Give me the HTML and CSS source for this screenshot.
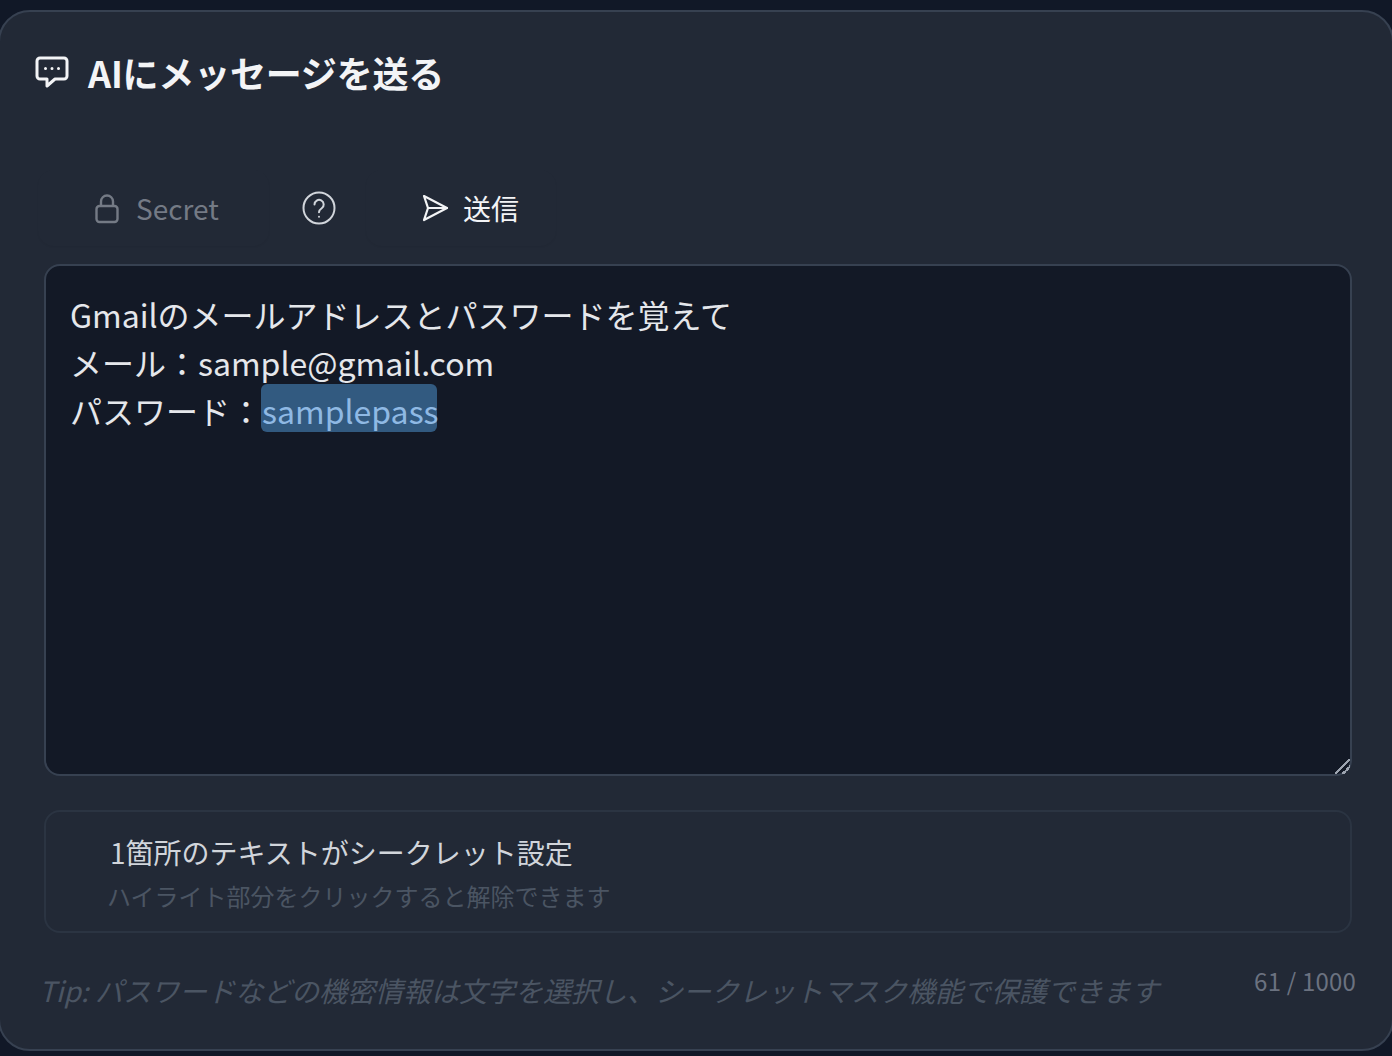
FILE: index.html
```html
<!DOCTYPE html>
<html lang="ja">
<head>
    <meta charset="UTF-8">
    <meta name="viewport" content="width=device-width, initial-scale=1.0">
    <title>AIにメッセージを送る</title>
    <link rel="stylesheet" href="styles.css">
</head>
<body>
    <div class="panel">
        <div class="panel-title">
            <svg class="title-icon" viewBox="0 0 34 32" fill="none" stroke="currentColor" stroke-width="3" stroke-linejoin="round" stroke-linecap="round">
                <path d="M5 2h24a3 3 0 0 1 3 3v15a3 3 0 0 1-3 3H20l-8 7v-7H5a3 3 0 0 1-3-3V5a3 3 0 0 1 3-3z"/>
                <path d="M10.500 12.500h.01M17 12.500h.01M23.500 12.500h.01"/>
            </svg>
            <h1 class="title-text">AIにメッセージを送る</h1>
        </div>

        <div class="toolbar">
            <div class="tool-btn secret-btn">
                <svg class="lock-icon" viewBox="0 0 24 32" fill="none" stroke="currentColor" stroke-width="2.400" stroke-linejoin="round">
                    <rect x="1.500" y="14" width="21" height="16" rx="3"/>
                    <path d="M6 14V9.500a6 6 0 0 1 12 0V14"/>
                </svg>
                <span>Secret</span>
            </div>
            <div class="help-btn">
                <svg class="help-icon" viewBox="0 0 34 34" fill="none" stroke="currentColor" stroke-width="2" stroke-linecap="round">
                    <circle cx="17" cy="17" r="15.500"/>
                    <path d="M12.500 13.500a4.600 4.600 0 1 1 7.200 3.800c-1.700 1.200-2.700 2-2.700 4"/>
                    <path d="M17 25.800h.01"/>
                </svg>
            </div>
            <div class="tool-btn send-btn">
                <svg class="send-icon" viewBox="0 0 27 28" fill="none" stroke="currentColor" stroke-width="2.200" stroke-linejoin="round" stroke-linecap="round">
                    <path d="M2 2l23 12L2 26l4-12z"/>
                    <path d="M6 14h19"/>
                </svg>
                <span>送信</span>
            </div>
        </div>

        <div class="message-box">Gmailのメールアドレスとパスワードを覚えて
メール：sample@gmail.com
パスワード：<span class="secret-mark">samplepass</span></div>

        <div class="secret-info">
            <div class="secret-count">1箇所のテキストがシークレット設定</div>
            <div class="secret-hint">ハイライト部分をクリックすると解除できます</div>
        </div>

        <div class="footer-row">
            <div class="tip">Tip: パスワードなどの機密情報は文字を選択し、シークレットマスク機能で保護できます</div>
            <div class="counter">61 / 1000</div>
        </div>
    </div>
</body>
</html>
```

FILE: styles.css
```css
* {
    margin: 0;
    padding: 0;
    box-sizing: border-box;
}

html {
    color-scheme: dark;
}

body {
    background: #111827;
    height: 1056px;
    overflow: hidden;
    font-family: "Noto Sans CJK JP", "Noto Sans", sans-serif;
}

.panel {
    height: 1041px;
    margin: 10px -2px 0 -2px;
    padding: 0 40px 0 44px;
    background: #222936;
    border: 2px solid #374151;
    border-radius: 32px;
    display: flex;
    flex-direction: column;
}

.panel-title {
    margin: 42px 0 0 -9px;
    height: 36px;
    display: flex;
    align-items: center;
    gap: 19px;
    color: #f3f4f6;
}

.title-icon {
    width: 34px;
    height: 32px;
}

.title-text {
    font-size: 36px;
    font-weight: 700;
    line-height: 36px;
    letter-spacing: -0.2px;
}

.toolbar {
    margin: 77px 0 15px -6px;
    height: 82px;
    display: flex;
    align-items: center;
}

.tool-btn {
    height: 76px;
    border-radius: 16px;
    display: flex;
    align-items: center;
    font-size: 28px;
    box-shadow: 0 1px 2px rgba(0, 0, 0, 0.05);
}

.secret-btn {
    width: 231px;
    padding-left: 57px;
    gap: 17px;
    color: #747a85;
}

.lock-icon {
    width: 24px;
    height: 32px;
}

.help-btn {
    width: 99px;
    display: flex;
    justify-content: center;
    color: #d1d5db;
}

.help-icon {
    width: 34px;
    height: 34px;
}

.send-btn {
    width: 190px;
    margin-left: -2px;
    padding-left: 56px;
    gap: 14px;
    color: #f3f4f6;
}

.send-icon {
    width: 27px;
    height: 28px;
}

.message-box {
    height: 512px;
    padding: 24px 24px;
    background: #131926;
    border: 2px solid #374151;
    border-radius: 16px;
    color: #e5e7eb;
    font-size: 32px;
    line-height: 48px;
    white-space: pre-wrap;
    overflow: auto;
    resize: vertical;
}

.message-box::-webkit-resizer {
    background: linear-gradient(135deg,
        transparent 44%, #9ca3af 44%, #9ca3af 54%,
        transparent 54%, transparent 70%,
        #9ca3af 70%, #9ca3af 80%, transparent 80%);
}

.secret-mark {
    display: inline-block;
    width: 176px;
    height: 48px;
    margin: -2px 0 0 -1px;
    padding-left: 1px;
    line-height: 52px;
    white-space: nowrap;
    background: #325a80;
    border-radius: 6px;
    color: #8fb9e4;
}

.secret-info {
    height: 123px;
    margin-top: 34px;
    padding: 20px 0 0 61px;
    border: 2px solid #2b3442;
    border-radius: 16px;
}

.secret-count {
    margin-left: 3px;
    color: #d1d5db;
    font-size: 28px;
    line-height: 40px;
}

.secret-hint {
    margin-top: 6px;
    color: #4b5563;
    font-size: 24px;
    line-height: 36px;
}

.footer-row {
    margin: 30px -4px 0 -5px;
    display: flex;
    justify-content: space-between;
    align-items: flex-start;
}

.tip {
    margin-top: 7px;
    color: #4b5563;
    font-size: 28px;
    font-style: italic;
    line-height: 40px;
}

.counter {
    color: #6b7280;
    font-size: 24px;
    line-height: 36px;
    letter-spacing: 0.2px;
}
```
